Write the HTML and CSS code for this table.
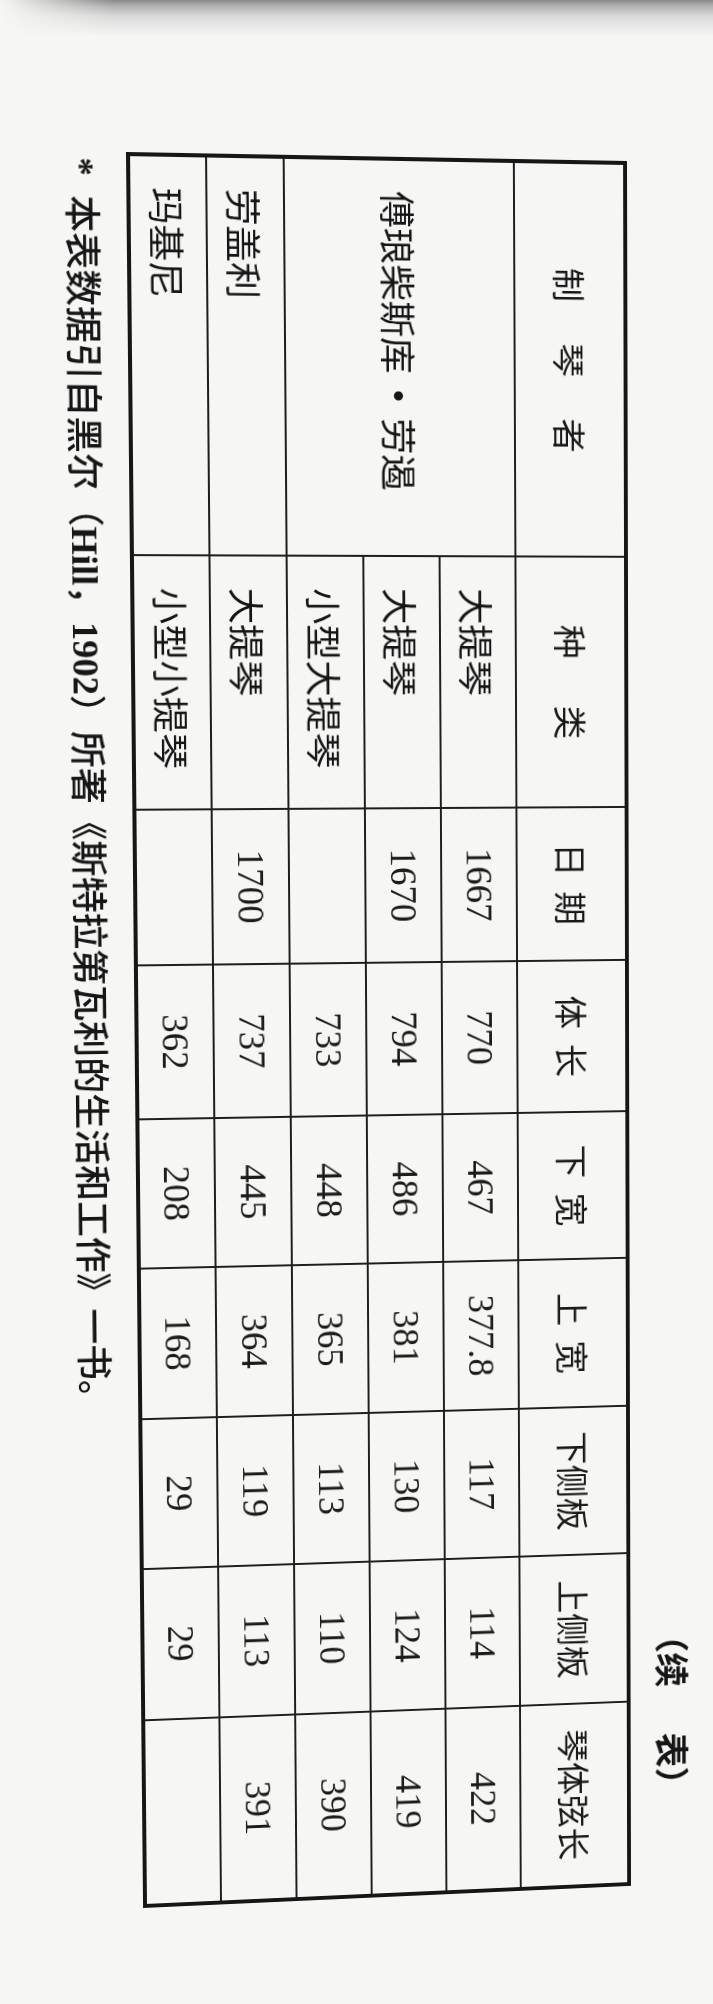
FILE: index.html
```html
<!DOCTYPE html>
<html lang="zh-CN">
<head>
<meta charset="utf-8">
<title>续表</title>
<link rel="stylesheet" href="styles.css">
</head>
<body>
<div class="photo">
  <div class="page">
    <div class="sheet">
      <div class="caption">（续 表）</div>
      <table class="grid">
        <colgroup>
          <col class="c-maker"><col class="c-kind"><col class="c-date"><col class="c-len"><col class="c-lw"><col class="c-uw"><col class="c-lr"><col class="c-ur"><col class="c-str">
        </colgroup>
        <thead>
          <tr class="head-row">
            <th><span class="sp41">制琴者</span></th>
            <th><span class="sp47">种类</span></th>
            <th><span class="sp15">日期</span></th>
            <th><span class="sp15">体长</span></th>
            <th><span class="sp15">下宽</span></th>
            <th><span class="sp15">上宽</span></th>
            <th>下侧板</th>
            <th>上侧板</th>
            <th>琴体弦长</th>
          </tr>
        </thead>
        <tbody>
          <tr class="data-row">
            <td class="cjk maker" rowspan="3">傅琅柴斯库<span class="dot">·</span>劳遏</td>
            <td class="cjk kind">大提琴</td>
            <td>1667</td><td>770</td><td>467</td><td>377.8</td><td>117</td><td>114</td><td>422</td>
          </tr>
          <tr class="data-row">
            <td class="cjk kind">大提琴</td>
            <td>1670</td><td>794</td><td>486</td><td>381</td><td>130</td><td>124</td><td>419</td>
          </tr>
          <tr class="data-row">
            <td class="cjk kind">小型大提琴</td>
            <td></td><td>733</td><td>448</td><td>365</td><td>113</td><td>110</td><td>390</td>
          </tr>
          <tr class="data-row">
            <td class="cjk maker">劳盖利</td>
            <td class="cjk kind">大提琴</td>
            <td>1700</td><td>737</td><td>445</td><td>364</td><td>119</td><td>113</td><td>391</td>
          </tr>
          <tr class="data-row">
            <td class="cjk maker">玛基尼</td>
            <td class="cjk kind">小型小提琴</td>
            <td></td><td>362</td><td>208</td><td>168</td><td>29</td><td>29</td><td></td>
          </tr>
        </tbody>
      </table>
      <p class="footnote"><span class="star">*</span>本表数据引自黑尔（<span class="lat">Hill</span>，<span class="lat">1902</span>）所著《斯特拉第瓦利的生活和工作》一书。</p>
    </div>
  </div>
</div>
</body>
</html>
```
FILE: styles.css
```css
html, body {
  margin: 0;
  padding: 0;
}

body {
  width: 713px;
  height: 2004px;
  overflow: hidden;
  background-color: #f6f6f4;
  background-image:
    linear-gradient(to right, #f6f6f4 0, rgba(246, 246, 244, 0) 16%),
    linear-gradient(to bottom, #8a8a8a 0, #b0b0b0 6px, #d9d9d9 16px, #f6f6f4 36px);
  background-size: 100% 44px, 100% 44px;
  background-repeat: no-repeat;
}

/* the whole photographed page, with the camera's slight keystone */
.photo {
  width: 713px;
  height: 2004px;
  overflow: hidden;
  transform-origin: 0 0;
  transform: matrix3d(1.021014, 0.02391, 0, 0.000036706,
                      0.011905, 1.028905, 0, 0.0000151815,
                      0, 0, 1, 0,
                      -4.4995, -7.4535, 0, 0.992994);
}

/* the printed page, laid out landscape and turned a quarter clockwise */
.page {
  width: 2004px;
  height: 713px;
  box-sizing: border-box;
  padding: 22px 0 0 152px;
  transform-origin: 0 0;
  transform: translateX(713px) rotate(90deg);
  color: #1b1b1b;
}

.sheet {
  width: 1752px;
}

.caption {
  text-align: right;
  padding-right: 82px;
  margin-bottom: 27px;
  font: 700 36px/36px "Noto Sans CJK SC", sans-serif;
  word-spacing: 39px;
  color: #161616;
}

.grid {
  width: 1752px;
  height: 500px;
  table-layout: fixed;
  border-collapse: collapse;
  border: 4px solid #161616;
}

.c-maker { width: 393px; }
.c-kind { width: 252px; }
.c-date { width: 155px; }
.c-len { width: 154px; }
.c-lw { width: 150px; }
.c-uw { width: 152px; }
.c-lr { width: 152px; }
.c-ur { width: 154px; }
.c-str { width: 190px; }

.head-row { height: 113px; }
.data-row { height: 77px; }

.grid th,
.grid td {
  border: 2px solid #1e1e1e;
  padding: 0;
  text-align: center;
  vertical-align: middle;
  white-space: nowrap;
}

.grid th {
  font: 400 34px/1 "Noto Sans CJK SC", sans-serif;
  color: #181818;
}

.grid td {
  font: 400 37px/1 "Liberation Serif", "Noto Sans CJK SC", serif;
}

.grid td.cjk {
  font: 400 36px/1 "Noto Sans CJK SC", sans-serif;
  text-align: left;
  color: #151515;
}

.grid td.maker { padding-left: 30px; }
.grid td.kind { padding-left: 31px; }

.dot {
  display: inline-block;
  width: 44px;
  text-align: center;
  font-weight: 700;
}

.sp41 { letter-spacing: 41px; margin-right: -41px; }
.sp47 { letter-spacing: 47px; margin-right: -47px; }
.sp15 { letter-spacing: 15px; margin-right: -15px; }

.footnote {
  margin: 27px 0 0 6px;
  font: 500 36px/36px "Liberation Serif", "Noto Sans CJK SC", serif;
  color: #161616;
  white-space: nowrap;
}

.footnote .lat {
  font-weight: 700;
}

.star {
  display: inline-block;
  margin-right: 19px;
  font-weight: 700;
}
```
